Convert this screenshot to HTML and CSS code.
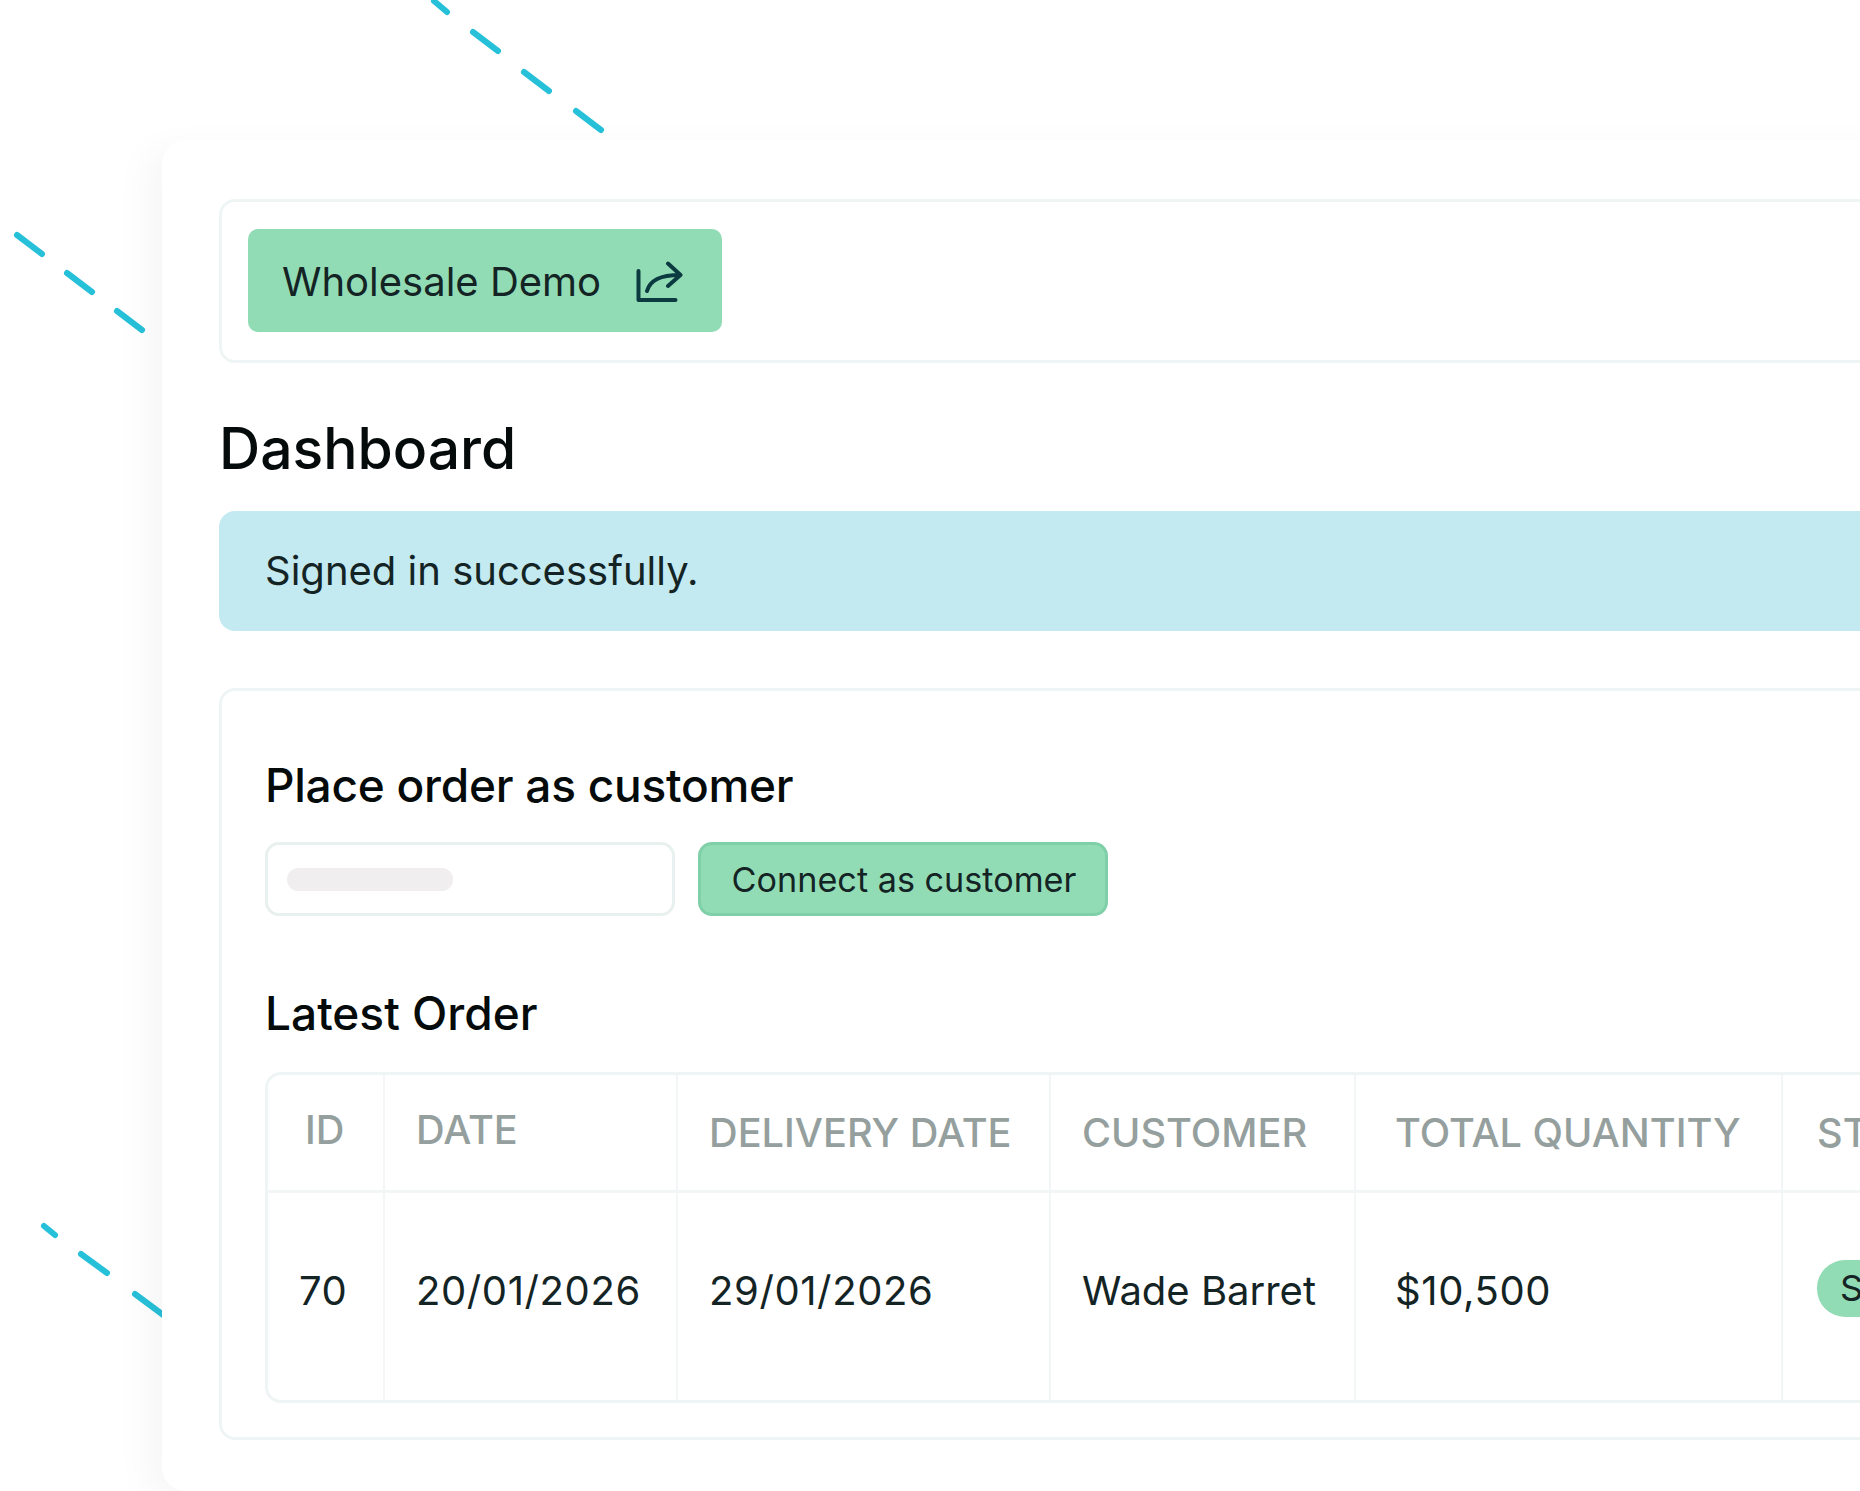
FILE: index.html
```html
<!DOCTYPE html>
<html lang="en">
<head>
<meta charset="utf-8">
<title>Dashboard</title>
<link rel="stylesheet" href="styles.css">
</head>
<body>
<div class="stage">
  <svg class="dashes" width="1860" height="1491" viewBox="0 0 1860 1491" aria-hidden="true">
    <path d="M434 1L447 12M473 32L498 51M524 72L549 91M576 111L601 130"/>
    <path d="M17 235L42 254M67 273L92 292M117 311L142 330"/>
    <path d="M44 1226L55 1235M81 1254L107 1273M135 1294L170 1320"/>
  </svg>
  <main class="card">
    <section class="panel topbar">
      <a class="demo-btn" href="#">
        <span>Wholesale Demo</span>
        <svg class="share-icon" width="48" height="44" viewBox="0 0 48 44" fill="none" aria-hidden="true">
          <path d="M2.500 10V39H39.500"/>
          <path d="M11 30C14 19 24 14 44 14M32 2.500L44.500 14L32 25"/>
        </svg>
      </a>
    </section>
    <h1 class="title">Dashboard</h1>
    <div class="alert">Signed in successfully.</div>
    <section class="panel content">
      <h2 class="heading tight">Place order as customer</h2>
      <div class="connect-row">
        <div class="select"><span class="skeleton"></span></div>
        <button class="connect-btn" type="button">Connect as customer</button>
      </div>
      <h2 class="heading latest">Latest Order</h2>
      <div class="table-wrap">
        <table class="orders">
          <colgroup>
            <col class="c1"><col class="c2"><col class="c3"><col class="c4"><col class="c5"><col class="c6">
          </colgroup>
          <thead>
            <tr>
              <th class="id-col"><span class="raised">ID</span></th>
              <th><span class="raised">DATE</span></th>
              <th>DELIVERY DATE</th>
              <th>CUSTOMER</th>
              <th class="qty-col">TOTAL QUANTITY</th>
              <th class="status-col">STATUS</th>
            </tr>
          </thead>
          <tbody>
            <tr>
              <td class="id-cell num">70</td>
              <td class="num">20/01/2026</td>
              <td class="num">29/01/2026</td>
              <td>Wade Barret</td>
              <td class="qty-col num">$10,500</td>
              <td class="status-col"><span class="pill">Shipped</span></td>
            </tr>
          </tbody>
        </table>
      </div>
    </section>
  </main>
</div>
</body>
</html>
```
FILE: styles.css
```css
* { box-sizing: border-box; }
html, body { margin: 0; padding: 0; background: #fff; }
body { font-family: Inter, "Liberation Sans", sans-serif; color: #142425; }
.stage { position: relative; width: 1860px; height: 1491px; overflow: hidden; padding: 140px 0 0 162px; }
.dashes { position: absolute; left: 0; top: 0; }
.dashes path { fill: none; stroke: #27c0d9; stroke-width: 6; stroke-linecap: round; }
.card {
  position: relative; width: 1900px; height: 1351px; padding: 59px 0 0 57px;
  background: #fff; border-radius: 24px; box-shadow: -16px 8px 36px rgba(0, 0, 0, 0.035);
}
.panel { border: 3px solid #eff4f4; border-radius: 16px; background: #fff; }
.topbar { height: 164px; padding: 27px 0 0 26px; }
.demo-btn {
  display: flex; align-items: center; width: 474px; height: 103px; padding: 2px 0 0 34px; gap: 35px;
  background: #92dcb5; border-radius: 10px; color: #142425; text-decoration: none; font-size: 40px; font-weight: 400;
}
.share-icon { margin-top: 2px; }
.share-icon path { stroke: #0b3a40; stroke-width: 4; stroke-linecap: round; stroke-linejoin: round; }
.title { margin: 0; height: 148px; padding-top: 51px; font-size: 57px; line-height: 70px; font-weight: 500; color: #050a0a; }
.alert {
  display: flex; align-items: center; height: 120px; padding: 0 0 2px 46px; background: #c3eaf0;
  border-radius: 16px; font-size: 40px; font-weight: 400; color: #142425; margin-bottom: 57px;
}
.content { height: 752px; padding: 66px 0 0 43px; }
.heading { margin: 0; font-size: 46px; line-height: 56px; font-weight: 500; color: #050a0a; }
.tight { letter-spacing: -0.25px; }
.connect-row { display: flex; gap: 23px; margin-top: 29px; }
.select {
  display: flex; align-items: center; width: 410px; height: 74px; padding-left: 19px;
  border: 3px solid #e8f1ef; border-radius: 14px; background: #fff;
}
.skeleton { display: block; width: 166px; height: 23px; border-radius: 12px; background: #f0eeee; }
.connect-btn {
  width: 410px; height: 74px; padding: 0 0 0 2px; border: 3px solid #7fd0a8; border-radius: 14px;
  background: #92dcb5; color: #142425; font-family: inherit; font-size: 34.2px; font-weight: 400;
}
.latest { margin-top: 69px; }
.table-wrap { margin-top: 31px; width: 1800px; height: 331px; border: 3px solid #eff4f4; border-radius: 16px 0 0 16px; }
.orders { border-collapse: collapse; table-layout: fixed; width: 1800px; }
.c1 { width: 116px; } .c2 { width: 293px; } .c3 { width: 373px; } .c4 { width: 305px; } .c5 { width: 427px; } .c6 { width: 286px; }
.orders th, .orders td { padding: 0 0 0 31px; text-align: left; border-left: 2px solid #f2f6f6; }
.orders th:first-child, .orders td:first-child { border-left: 0; }
.orders th { height: 116px; padding-top: 2px; font-size: 39.7px; font-weight: 500; color: #959f9e; border-bottom: 3px solid #f2f6f6; }
.orders td { height: 209px; padding-bottom: 12px; font-size: 40px; color: #142425; }
.orders td.num { letter-spacing: 0.6px; }
.raised { position: relative; top: -3px; }
.orders th.id-col { padding-left: 37px; }
.orders td.id-cell { padding-left: 31px; }
.orders .qty-col { padding-left: 39px; }
.orders .status-col { padding-left: 34px; }
.pill { display: inline-block; position: relative; top: -2px; height: 57px; line-height: 57px; padding: 0 23px; border-radius: 28px; background: #92dcb5; font-size: 36px; }
```
